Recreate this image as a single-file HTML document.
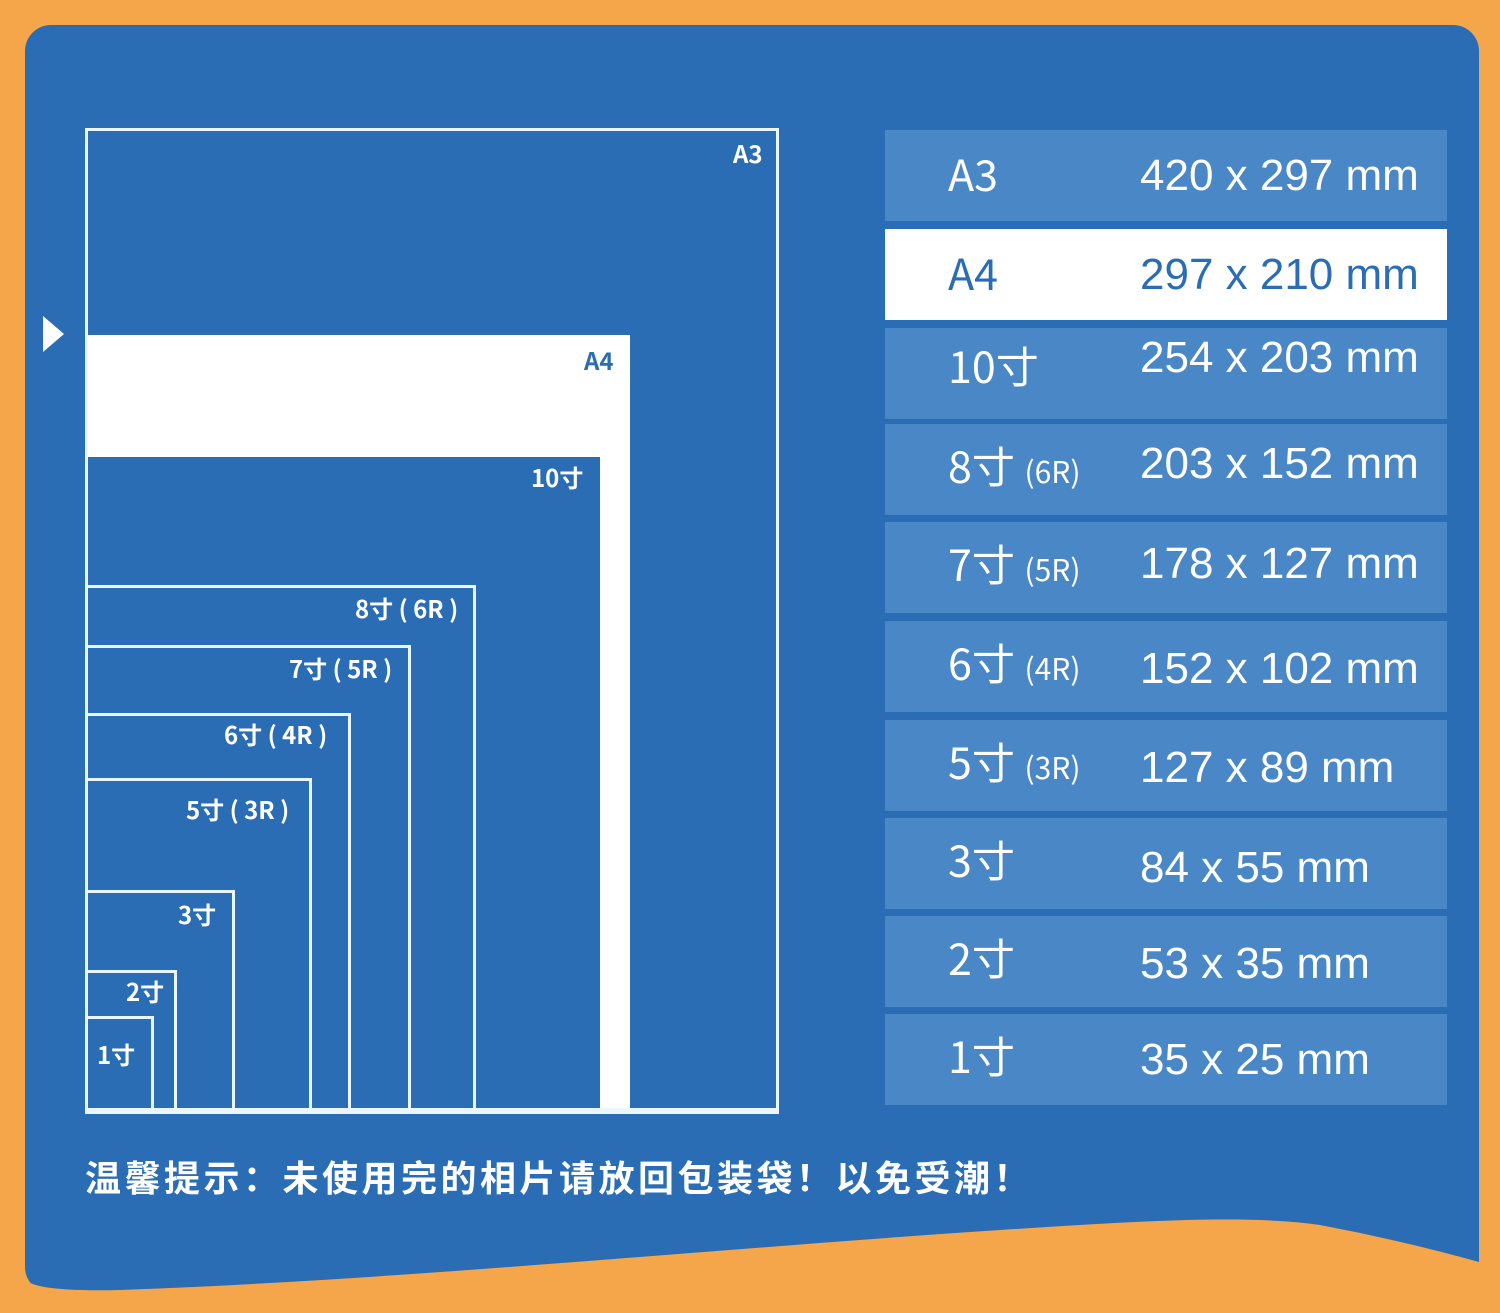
<!DOCTYPE html>
<html><head><meta charset="utf-8"><style>
*{margin:0;padding:0;box-sizing:border-box}
html,body{width:1500px;height:1313px;overflow:hidden}
body{background:#f5a64a;position:relative;font-family:"Liberation Sans","Noto Sans CJK SC",sans-serif}
.panel{position:absolute;left:25px;top:25px;width:1454px;height:1268px;background:#2a6db5;border-radius:26px}
.a{position:absolute}
.box{position:absolute;border:3px solid #eaf6ff;border-bottom:none;border-left-width:3px}
.lab{position:absolute;color:#fff;font-size:24px;font-weight:bold;font-family:"Noto Sans CJK SC",sans-serif;white-space:nowrap;line-height:1}
.row{position:absolute;left:885px;width:562px;height:91px;background:#4a87c6;color:#fff}
.row .n{position:absolute;left:63px;top:20px;font-size:43px;font-family:"Noto Sans CJK SC",sans-serif;line-height:1.1;white-space:nowrap}
.row .n small{font-size:30px}
.row .d{position:absolute;left:255px;top:22px;font-size:44px;line-height:1.1;white-space:nowrap}
.row.w{background:#fff;color:#2a6db5}
</style></head><body>
<div class="panel"></div>
<svg class="a" style="left:0;top:1180px" width="1500" height="133"><path d="M25 112 L25 98 Q30 112 120 110 C400 100 700 70 1000 50 C1150 40 1250 35 1320 45 Q1400 60 1479 82 L1479 133 L0 133 Z" fill="#f5a64a"/></svg>
<div class="a" style="left:43px;top:316px;width:0;height:0;border-left:21px solid #fff;border-top:18px solid transparent;border-bottom:18px solid transparent"></div>
<div class="a" style="left:85px;top:128px;width:694px;height:986px;border:3px solid #eaf6ff"></div>
<div class="a" style="left:88px;top:335px;width:542px;height:776px;background:#fff"></div>
<div class="a" style="left:88px;top:457px;width:512px;height:654px;background:#2a6db5"></div>
<div class="box" style="left:85px;top:585px;width:391px;height:526px"></div>
<div class="box" style="left:85px;top:645px;width:326px;height:466px"></div>
<div class="box" style="left:85px;top:713px;width:266px;height:398px"></div>
<div class="box" style="left:85px;top:778px;width:227px;height:333px"></div>
<div class="box" style="left:85px;top:890px;width:150px;height:221px"></div>
<div class="box" style="left:85px;top:970px;width:92px;height:141px"></div>
<div class="box" style="left:85px;top:1016px;width:69px;height:95px"></div>
<div class="a" style="left:85px;top:1108px;width:694px;height:4px;background:#eaf6ff"></div>
<div class="lab" style="left:733px;top:141px">A3</div>
<div class="lab" style="left:584px;top:348px;color:#2a6db5">A4</div>
<div class="lab" style="left:531px;top:465px">10寸</div>
<div class="lab" style="left:355px;top:596px">8寸 ( 6R )</div>
<div class="lab" style="left:289px;top:656px">7寸 ( 5R )</div>
<div class="lab" style="left:224px;top:722px">6寸 ( 4R )</div>
<div class="lab" style="left:186px;top:797px">5寸 ( 3R )</div>
<div class="lab" style="left:178px;top:902px">3寸</div>
<div class="lab" style="left:126px;top:979px">2寸</div>
<div class="lab" style="left:97px;top:1042px">1寸</div>
<div class="row" style="top:130px"><span class="n">A3</span><span class="d">420 x 297 mm</span></div>
<div class="row w" style="top:229px"><span class="n">A4</span><span class="d">297 x 210 mm</span></div>
<div class="row" style="top:328px"><span class="n" style="top:14px">10寸</span><span class="d" style="top:6px">254 x 203 mm</span></div>
<div class="row" style="top:424px"><span class="n" style="top:18px">8寸 <small>(6R)</small></span><span class="d" style="top:16px">203 x 152 mm</span></div>
<div class="row" style="top:522px"><span class="n" style="top:18px">7寸 <small>(5R)</small></span><span class="d" style="top:18px">178 x 127 mm</span></div>
<div class="row" style="top:621px"><span class="n" style="top:18px">6寸 <small>(4R)</small></span><span class="d" style="top:24px">152 x 102 mm</span></div>
<div class="row" style="top:720px"><span class="n" style="top:18px">5寸 <small>(3R)</small></span><span class="d" style="top:24px">127 x 89 mm</span></div>
<div class="row" style="top:818px"><span class="n" style="top:18px">3寸</span><span class="d" style="top:26px">84 x 55 mm</span></div>
<div class="row" style="top:916px"><span class="n" style="top:18px">2寸</span><span class="d" style="top:24px">53 x 35 mm</span></div>
<div class="row" style="top:1014px"><span class="n" style="top:18px">1寸</span><span class="d" style="top:22px">35 x 25 mm</span></div>
<div class="a" style="left:85px;top:1155px;color:#fff;font-size:36px;font-weight:bold;letter-spacing:3.5px;font-family:'Noto Sans CJK SC',sans-serif;white-space:nowrap;line-height:1.2">温馨提示：未使用完的相片请放回包装袋！以免受潮！</div>
</body></html>
